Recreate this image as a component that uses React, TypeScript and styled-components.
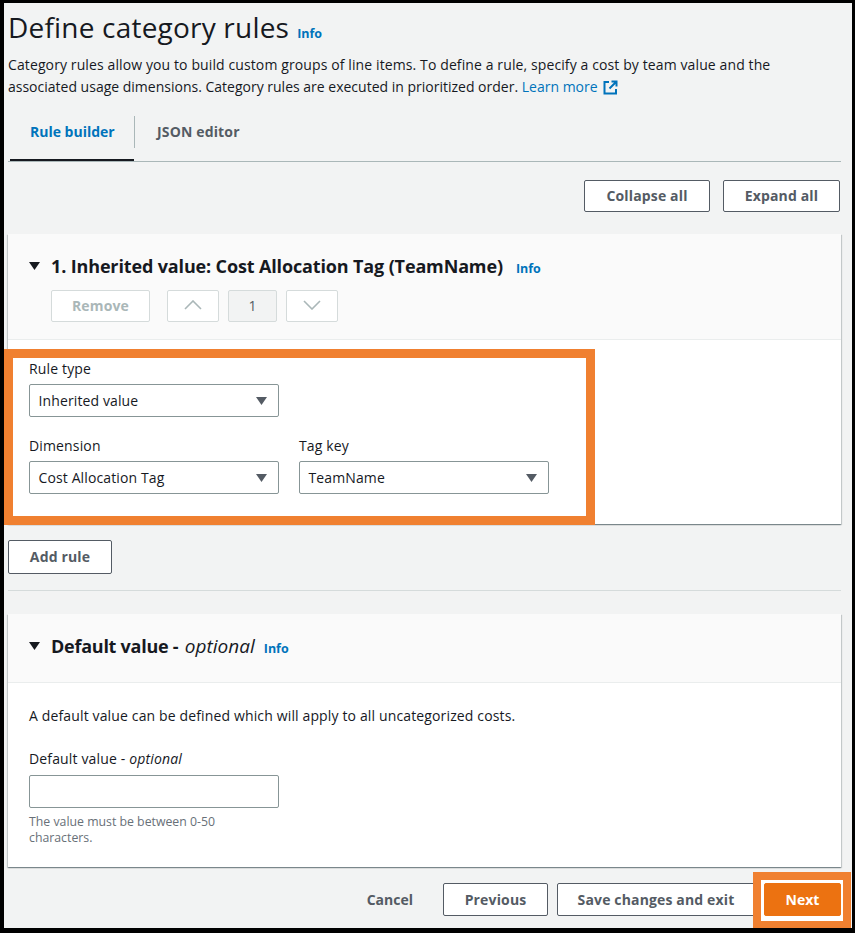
import React from "react";
import styled, { createGlobalStyle } from "styled-components";

const Global = createGlobalStyle`
  html, body { margin: 0; padding: 0; background: #000; }
  * { box-sizing: border-box; }
  body { font-family: "Open Sans", "Noto Sans", sans-serif; font-size: 14px; color: #16191f; }
`;

const Frame = styled.div`
  width: 855px;
  height: 933px;
  padding: 3px 3px 5px 4px;
  background: #000;
  overflow: hidden;
`;
const Page = styled.main`
  height: 925px;
  padding: 0 11px 0 4px;
  background: #f2f3f3;
  overflow: hidden;
`;
const Title = styled.h1`
  display: flex;
  align-items: baseline;
  gap: 8px;
  height: 51px;
  margin: 0;
  font-size: 28px;
  font-weight: 400;
  line-height: 48px;
  letter-spacing: 0.2px;
`;
const Info = styled.a`
  color: #0073bb;
  font-size: 12.5px;
  font-weight: 700;
  font-style: normal;
  letter-spacing: 0;
`;
const HeadingInfo = styled(Info)`
  margin-top: 4px;
`;
const Description = styled.p<{ $s?: number }>`
  margin: 0;
  font-size: 14px;
  line-height: 22px;
  white-space: nowrap;
  letter-spacing: ${(p) => p.$s ?? 0}px;
`;
const LinkText = styled.a`
  display: inline-flex;
  align-items: center;
  gap: 5px;
  color: #0073bb;
`;
const TabList = styled.div`
  display: flex;
  height: 52px;
  margin-top: 12px;
  padding-left: 2px;
  border-bottom: 1px solid #aab7b8;
`;
const Tab = styled.div<{ $active?: boolean }>`
  width: ${(p) => (p.$active ? "124px" : "auto")};
  height: 51px;
  padding-top: 6px;
  border-bottom: 2px solid ${(p) => (p.$active ? "#16191f" : "transparent")};
`;
const TabLabel = styled.div<{ $active?: boolean; $divider?: boolean }>`
  display: flex;
  align-items: center;
  height: 32px;
  padding: 0 20px 2px ${(p) => (p.$divider ? "20px" : "23px")};
  width: ${(p) => (p.$divider ? "125px" : "auto")};
  border-right: ${(p) => (p.$divider ? "1px solid #aab7b8" : "none")};
  color: ${(p) => (p.$active ? "#0073bb" : "#545b64")};
  font-weight: 700;
  letter-spacing: ${(p) => (p.$divider ? 0 : 0.15)}px;
  white-space: nowrap;
`;
const Toolbar = styled.div`
  display: flex;
  justify-content: flex-end;
  gap: 13px;
  margin-top: 18px;
  padding-right: 1px;
`;
const Button = styled.button<{ $w?: number; $h?: number }>`
  width: ${(p) => (p.$w ? `${p.$w}px` : "auto")};
  height: ${(p) => p.$h ?? 32}px;
  padding: 0 0 ${(p) => (p.$h === 33 ? 0 : 2)}px;
  flex: none;
  background: #fff;
  border: 1px solid #545b64;
  border-radius: 2px;
  color: #545b64;
  font: 700 14px "Open Sans", sans-serif;
  letter-spacing: 0.15px;
`;
const DisabledButton = styled(Button)`
  border-color: #d5dbdb;
  color: #aab7b8;
  display: flex;
  align-items: center;
  justify-content: center;
`;
const CounterBox = styled.div`
  display: flex;
  align-items: center;
  justify-content: center;
  width: 49px;
  height: 32px;
  padding-bottom: 2px;
  background: #f2f3f3;
  border: 1px solid #d5dbdb;
  border-radius: 2px;
  color: #545b64;
`;
const Card = styled.section<{ $h: number; $mt: number }>`
  height: ${(p) => p.$h}px;
  margin-top: ${(p) => p.$mt}px;
  background: #fff;
  box-shadow: 0 1px 1px rgba(0, 28, 36, 0.3), 1px 1px 1px rgba(0, 28, 36, 0.15), -1px 1px 1px rgba(0, 28, 36, 0.15);
`;
const CardHeader = styled.header<{ $h: number }>`
  height: ${(p) => p.$h}px;
  padding: 19px 21px 0;
  background: #fafafa;
  border-bottom: 1px solid #eaeded;
`;
const HeadingRow = styled.div`
  display: flex;
  align-items: center;
  height: 26px;
`;
const Caret = styled.svg`
  flex: none;
  width: 11px;
  height: 8px;
  margin-right: 11px;
`;
const CardHeading = styled.h2<{ $s: number }>`
  margin: 0 ${(p) => (p.$s < -0.2 ? 9 : 13)}px 0 0;
  font-size: 18px;
  font-weight: 700;
  line-height: 26px;
  letter-spacing: ${(p) => p.$s}px;
  white-space: nowrap;
`;
const HeadingOptional = styled.em`
  margin-left: 2px;
  font-size: 19px;
  font-weight: 400;
  letter-spacing: 0;
`;
const Optional = styled.em`
  font-weight: 400;
`;
const ControlRow = styled.div`
  display: flex;
  align-items: center;
  gap: 9px;
  margin: 11px 0 0 22px;
`;
const RemoveButton = styled(DisabledButton)`
  margin-right: 8px;
`;
const Highlight = styled.div`
  width: 591px;
  height: 176px;
  margin: 9px 0 0 -4px;
  padding: 0 16px;
  background: #fff;
  border: 9px solid #f08030;
`;
const FieldRow = styled.div`
  display: flex;
  gap: 20px;
  & + & {
    margin-top: 18px;
  }
`;
const Field = styled.div`
  display: flex;
  flex-direction: column;
  width: 250px;
`;
const Label = styled.label`
  height: 26px;
  font-size: 14px;
  line-height: 22px;
  letter-spacing: 0.15px;
  white-space: nowrap;
`;
const DefaultLabel = styled(Label)`
  height: 27px;
`;
const Select = styled.div`
  display: flex;
  align-items: center;
  justify-content: space-between;
  width: 250px;
  height: 33px;
  padding: 0 11px 0 8.5px;
  background: #fff;
  border: 1px solid #879596;
  border-radius: 2px;
  letter-spacing: 0.12px;
  white-space: nowrap;
`;
const SelectCaret = styled.svg`
  width: 11px;
  height: 8px;
`;
const Plain = styled.div`
  height: 34px;
  margin-top: 16px;
`;
const Divider = styled.hr`
  height: 1px;
  margin: 16px 0 0;
  border: 0;
  background: #d5dbdb;
`;
const CardBody = styled.div`
  padding: 22px 21px 0;
`;
const BodyText = styled.p`
  margin: 0;
  line-height: 22px;
  letter-spacing: 0.14px;
  white-space: nowrap;
`;
const DefaultField = styled(Field)`
  margin-top: 21px;
`;
const TextInput = styled.input`
  width: 250px;
  height: 33px;
  background: #fff;
  border: 1px solid #879596;
  border-radius: 2px;
`;
const Hint = styled.div`
  width: 215px;
  margin-top: 5.5px;
  color: #687078;
  font-size: 12.3px;
  line-height: 16px;
`;
const Footer = styled.footer`
  display: flex;
  align-items: center;
  justify-content: flex-end;
  height: 33px;
  margin-top: 16px;
`;
const CancelText = styled.span`
  margin-right: 30px;
  color: #545b64;
  font-weight: 700;
`;
const PreviousButton = styled(Button)`
  margin-right: 9px;
`;
const NextFrame = styled.div`
  position: relative;
  flex: none;
  margin: -11px -10px -12px -2px;
  padding: 3px 2px 5px 3px;
  background: #fff;
  border: 8px solid #f08030;
`;
const NextButton = styled.button`
  display: block;
  width: 77px;
  height: 33px;
  padding: 0;
  background: #ec7211;
  border: 1px solid #ec7211;
  border-radius: 2px;
  color: #fff;
  font: 700 14px "Open Sans", sans-serif;
`;

const Tri = () => (
  <Caret viewBox="0 0 11 8">
    <polygon points="0,0 11,0 5.5,8" fill="#16191f" />
  </Caret>
);
const SelCaret = () => (
  <SelectCaret viewBox="0 0 11 8">
    <polygon points="0,0 11,0 5.5,8" fill="#545b64" />
  </SelectCaret>
);
const Chevron = ({ up }: { up?: boolean }) => (
  <svg width="18" height="10" viewBox="0 0 18 10" fill="none" stroke="#aab7b8" strokeWidth="1.6">
    <polyline points={up ? "1,9 9,1 17,9" : "1,1 9,9 17,1"} />
  </svg>
);
const External = () => (
  <svg width="15" height="15" viewBox="0 0 15 15" fill="none" stroke="#0073bb" strokeWidth="2">
    <path d="M6 2H1.5v11.5H13V9" />
    <path d="M6.5 8.5L13 2M8.5 1.5h5v5" />
  </svg>
);

export default function App() {
  return (
    <>
      <Global />
      <Frame>
        <Page>
          <Title>
            Define category rules <Info>Info</Info>
          </Title>
          <Description $s={0.11}>
            Category rules allow you to build custom groups of line items. To define a rule, specify a cost by team value and the
          </Description>
          <Description>
            associated usage dimensions. Category rules are executed in prioritized order.{" "}
            <LinkText>
              Learn more <External />
            </LinkText>
          </Description>
          <TabList>
            <Tab $active>
              <TabLabel $active $divider>Rule builder</TabLabel>
            </Tab>
            <Tab>
              <TabLabel>JSON editor</TabLabel>
            </Tab>
          </TabList>
          <Toolbar>
            <Button $w={126}>Collapse all</Button>
            <Button $w={117}>Expand all</Button>
          </Toolbar>
          <Card $h={290} $mt={22}>
            <CardHeader $h={106}>
              <HeadingRow>
                <Tri />
                <CardHeading $s={-0.14}>1. Inherited value: Cost Allocation Tag (TeamName)</CardHeading>
                <HeadingInfo>Info</HeadingInfo>
              </HeadingRow>
              <ControlRow>
                <RemoveButton $w={99}>Remove</RemoveButton>
                <DisabledButton $w={52}><Chevron up /></DisabledButton>
                <CounterBox>1</CounterBox>
                <DisabledButton $w={52}><Chevron /></DisabledButton>
              </ControlRow>
            </CardHeader>
            <Highlight>
              <FieldRow>
                <Field>
                  <Label>Rule type</Label>
                  <Select>Inherited value<SelCaret /></Select>
                </Field>
              </FieldRow>
              <FieldRow>
                <Field>
                  <Label>Dimension</Label>
                  <Select>Cost Allocation Tag<SelCaret /></Select>
                </Field>
                <Field>
                  <Label>Tag key</Label>
                  <Select>TeamName<SelCaret /></Select>
                </Field>
              </FieldRow>
            </Highlight>
          </Card>
          <Plain>
            <Button $w={104} $h={34}>Add rule</Button>
          </Plain>
          <Divider />
          <Card $h={253} $mt={23}>
            <CardHeader $h={69}>
              <HeadingRow>
                <Tri />
                <CardHeading $s={-0.25}>Default value - <HeadingOptional>optional</HeadingOptional></CardHeading>
                <HeadingInfo>Info</HeadingInfo>
              </HeadingRow>
            </CardHeader>
            <CardBody>
              <BodyText>A default value can be defined which will apply to all uncategorized costs.</BodyText>
              <DefaultField>
                <DefaultLabel>Default value - <Optional>optional</Optional></DefaultLabel>
                <TextInput />
                <Hint>The value must be between 0-50 characters.</Hint>
              </DefaultField>
            </CardBody>
          </Card>
          <Footer>
            <CancelText>Cancel</CancelText>
            <PreviousButton $w={105} $h={33}>Previous</PreviousButton>
            <Button $w={198} $h={33}>Save changes and exit</Button>
            <NextFrame>
              <NextButton>Next</NextButton>
            </NextFrame>
          </Footer>
        </Page>
      </Frame>
    </>
  );
}
